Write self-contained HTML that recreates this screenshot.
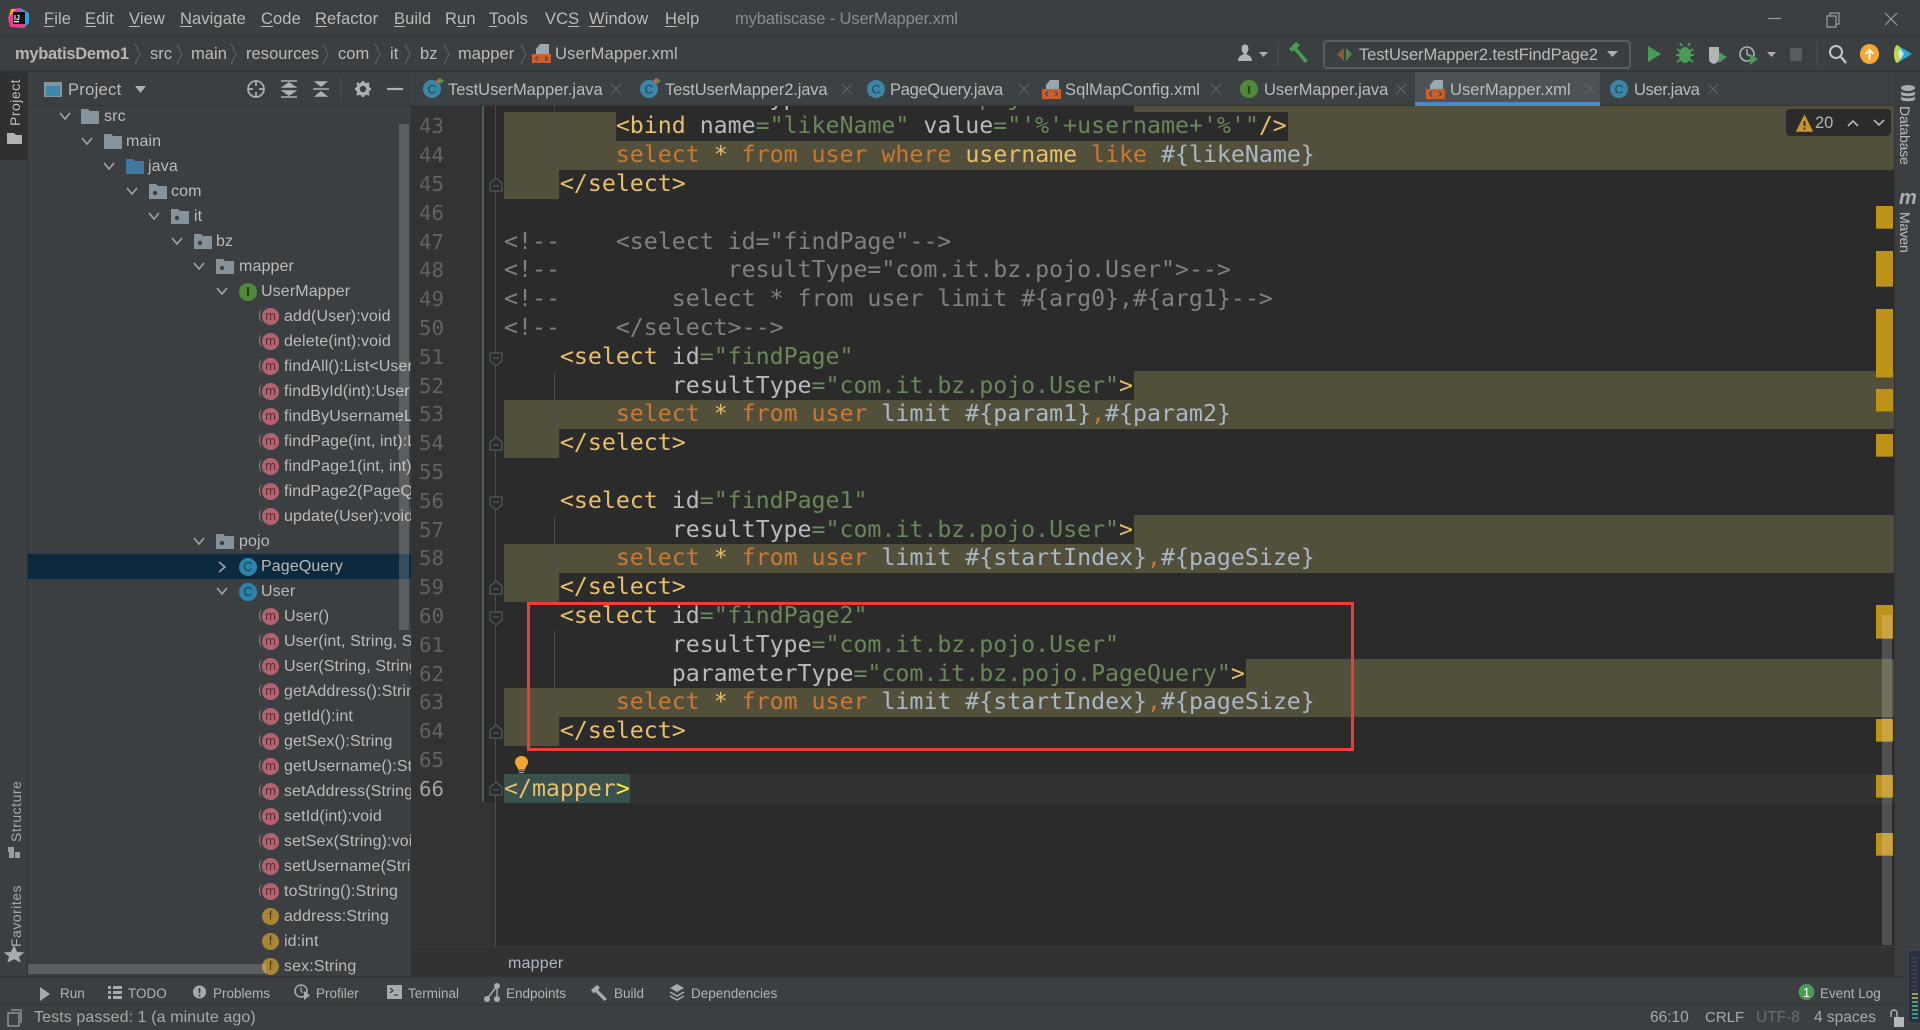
<!DOCTYPE html>
<html><head><meta charset="utf-8"><title>mybatiscase - UserMapper.xml</title>
<style>
html,body{margin:0;padding:0;width:1920px;height:1030px;overflow:hidden;background:#3c3f41;font-family:"Liberation Sans",sans-serif;color:#bbb}
div,span,i,b{position:absolute;white-space:nowrap}
u{text-decoration:underline;text-underline-offset:2px}
.m span{top:9px;font-size:16.5px;line-height:20px;letter-spacing:.1px}
.n span{top:44px;font-size:16.5px;line-height:20px;letter-spacing:.05px}
.tb span{top:80px;font-size:16.5px;line-height:20px}
.bt span{top:984px;font-size:13.5px;line-height:18px;color:#b3b3b3}
.st span{top:1008px;font-size:16px;line-height:20px;color:#a8a8a8}
.r{left:0;width:411px;height:25px;line-height:25px;font-size:16px;letter-spacing:.12px}
.r b{font-weight:normal;left:284px;top:0}
.ic{display:block;width:17px;height:17px;border-radius:50%;left:262px;top:4px;font-style:normal;font-size:13px;line-height:16px;text-align:center;letter-spacing:0}
.ic.m{background:#b5626f;color:#5e2a33}
.ic.m:before{content:"";position:absolute;left:-3px;top:1px;width:6px;height:13px;border-left:1.5px solid #8b8d8f;border-radius:50%}
.ic.f{background:#a98536;color:#51401a}
.ic.cl{background:#2e83ab;color:#173f55;width:18px;height:18px;left:239px;line-height:18px}
.ic.gi{background:#4f8a38;color:#263f1a;width:18px;height:18px;left:239px;line-height:18px;font-family:"Liberation Serif",serif;font-weight:bold}
.r svg{position:absolute}
.l{left:504px;height:28.8px;line-height:28.8px;margin-top:.4px;font-family:"DejaVu Sans Mono","Liberation Mono",monospace;font-size:23.25px;letter-spacing:-.02px;white-space:pre;color:#a9b7c6}
.t{color:#e8bf6a;position:static}.a{color:#bababa;position:static}.v{color:#6a8759;position:static}.k{color:#cc7832;position:static}.c{color:#808080;position:static}.h{color:#a9b7c6;position:static}
.o{background:#52503a;height:29px}
.ln{left:419px;margin-top:.4px;font-family:"DejaVu Sans Mono","Liberation Mono",monospace;font-size:20.8px;line-height:28.8px;color:#606366}
.mk{left:1876px;width:17px;background:#be9117;box-shadow:inset 0 -1px 0 #8a7023}
.g{left:554px;width:1px;background:#474747}
.v1{font-size:14px;letter-spacing:.5px;color:#bdbdbd;line-height:16px;transform-origin:0 0}
</style></head><body>

<!-- bars -->
<div style="left:0;top:35px;width:1920px;height:1px;background:#323334"></div>
<div style="left:0;top:71px;width:1920px;height:1px;background:#323334"></div>

<!-- menu -->
<div class="m" style="left:0;top:0">
<span style="left:44px"><u>F</u>ile</span>
<span style="left:85px"><u>E</u>dit</span>
<span style="left:129px"><u>V</u>iew</span>
<span style="left:180px"><u>N</u>avigate</span>
<span style="left:261px"><u>C</u>ode</span>
<span style="left:315px"><u>R</u>efactor</span>
<span style="left:394px"><u>B</u>uild</span>
<span style="left:445px">R<u>u</u>n</span>
<span style="left:489px"><u>T</u>ools</span>
<span style="left:545px">VC<u>S</u></span>
<span style="left:589px"><u>W</u>indow</span>
<span style="left:665px"><u>H</u>elp</span>
<span style="left:735px;color:#8a8d8f;letter-spacing:-.13px">mybatiscase - UserMapper.xml</span>
</div>

<!-- nav -->
<div class="n" style="left:0;top:0">
<span style="left:15px;font-weight:bold;color:#b5b5b5;letter-spacing:-.3px">mybatisDemo1</span>
<span style="left:150px">src</span>
<span style="left:191px">main</span>
<span style="left:246px">resources</span>
<span style="left:338px">com</span>
<span style="left:390px">it</span>
<span style="left:420px">bz</span>
<span style="left:458px">mapper</span>
<span style="left:555px;letter-spacing:.2px">UserMapper.xml</span>
<span style="left:1359px;letter-spacing:-.08px;top:45px">TestUserMapper2.testFindPage2</span>
</div>
<div style="left:1323px;top:40px;width:304px;height:25px;border:2px solid #5a5d5f;border-radius:4px"></div>

<!-- left stripe & tree -->
<div style="left:0;top:72px;width:27px;height:88px;background:#2e3031"></div>
<div style="left:27px;top:72px;width:1px;height:904px;background:#323334"></div>

<div style="left:0;top:0;width:411px;height:976px;overflow:hidden">
<div style="left:28px;top:554px;width:383px;height:25px;background:#0d293e"></div>

<div class="r" style="top:104px"><svg style="left:59px;top:8px" width="12" height="9"><path d="M1 1l5 6 5-6" stroke="#a0a5a8" stroke-width="1.6" fill="none"/></svg><svg style="left:81px;top:5px" width="18" height="15"><path d="M0 0h7l2 2h9v13H0z" fill="#87939a"/></svg><b style="left:104px">src</b></div>
<div class="r" style="top:129px"><svg style="left:81px;top:8px" width="12" height="9"><path d="M1 1l5 6 5-6" stroke="#a0a5a8" stroke-width="1.6" fill="none"/></svg><svg style="left:104px;top:5px" width="18" height="15"><path d="M0 0h7l2 2h9v13H0z" fill="#87939a"/></svg><b style="left:126px">main</b></div>
<div class="r" style="top:154px"><svg style="left:103px;top:8px" width="12" height="9"><path d="M1 1l5 6 5-6" stroke="#a0a5a8" stroke-width="1.6" fill="none"/></svg><svg style="left:126px;top:5px" width="18" height="15"><path d="M0 0h7l2 2h9v13H0z" fill="#3d7a9e"/></svg><b style="left:148px">java</b></div>
<div class="r" style="top:179px"><svg style="left:126px;top:8px" width="12" height="9"><path d="M1 1l5 6 5-6" stroke="#a0a5a8" stroke-width="1.6" fill="none"/></svg><svg style="left:149px;top:5px" width="18" height="15"><path d="M0 0h7l2 2h9v13H0z" fill="#87939a"/><circle cx="6" cy="9" r="2.2" fill="#3c3f41"/></svg><b style="left:171px">com</b></div>
<div class="r" style="top:204px"><svg style="left:148px;top:8px" width="12" height="9"><path d="M1 1l5 6 5-6" stroke="#a0a5a8" stroke-width="1.6" fill="none"/></svg><svg style="left:171px;top:5px" width="18" height="15"><path d="M0 0h7l2 2h9v13H0z" fill="#87939a"/><circle cx="6" cy="9" r="2.2" fill="#3c3f41"/></svg><b style="left:194px">it</b></div>
<div class="r" style="top:229px"><svg style="left:171px;top:8px" width="12" height="9"><path d="M1 1l5 6 5-6" stroke="#a0a5a8" stroke-width="1.6" fill="none"/></svg><svg style="left:194px;top:5px" width="18" height="15"><path d="M0 0h7l2 2h9v13H0z" fill="#87939a"/><circle cx="6" cy="9" r="2.2" fill="#3c3f41"/></svg><b style="left:216px">bz</b></div>
<div class="r" style="top:254px"><svg style="left:193px;top:8px" width="12" height="9"><path d="M1 1l5 6 5-6" stroke="#a0a5a8" stroke-width="1.6" fill="none"/></svg><svg style="left:216px;top:5px" width="18" height="15"><path d="M0 0h7l2 2h9v13H0z" fill="#87939a"/><circle cx="6" cy="9" r="2.2" fill="#3c3f41"/></svg><b style="left:239px">mapper</b></div>
<div class="r" style="top:279px"><svg style="left:216px;top:8px" width="12" height="9"><path d="M1 1l5 6 5-6" stroke="#a0a5a8" stroke-width="1.6" fill="none"/></svg><i class="ic gi">I</i><b style="left:261px">UserMapper</b></div>

<div class="r" style="top:304px"><i class="ic m">m</i><b>add(User):void</b></div>
<div class="r" style="top:329px"><i class="ic m">m</i><b>delete(int):void</b></div>
<div class="r" style="top:354px"><i class="ic m">m</i><b>findAll():List&lt;User&gt;</b></div>
<div class="r" style="top:379px"><i class="ic m">m</i><b>findById(int):User</b></div>
<div class="r" style="top:404px"><i class="ic m">m</i><b>findByUsernameLike(String)</b></div>
<div class="r" style="top:429px"><i class="ic m">m</i><b>findPage(int, int):List</b></div>
<div class="r" style="top:454px"><i class="ic m">m</i><b>findPage1(int, int):List</b></div>
<div class="r" style="top:479px"><i class="ic m">m</i><b>findPage2(PageQuery)</b></div>
<div class="r" style="top:504px"><i class="ic m">m</i><b>update(User):void</b></div>

<div class="r" style="top:529px"><svg style="left:193px;top:8px" width="12" height="9"><path d="M1 1l5 6 5-6" stroke="#a0a5a8" stroke-width="1.6" fill="none"/></svg><svg style="left:216px;top:5px" width="18" height="15"><path d="M0 0h7l2 2h9v13H0z" fill="#87939a"/><circle cx="6" cy="9" r="2.2" fill="#3c3f41"/></svg><b style="left:239px">pojo</b></div>
<div class="r" style="top:554px"><svg style="left:218px;top:7px" width="9" height="12"><path d="M1 1l6 5-6 5" stroke="#a0a5a8" stroke-width="1.6" fill="none"/></svg><i class="ic cl">C</i><b style="left:261px">PageQuery</b></div>
<div class="r" style="top:579px"><svg style="left:216px;top:8px" width="12" height="9"><path d="M1 1l5 6 5-6" stroke="#a0a5a8" stroke-width="1.6" fill="none"/></svg><i class="ic cl">C</i><b style="left:261px">User</b></div>

<div class="r" style="top:604px"><i class="ic m">m</i><b>User()</b></div>
<div class="r" style="top:629px"><i class="ic m">m</i><b>User(int, String, String)</b></div>
<div class="r" style="top:654px"><i class="ic m">m</i><b>User(String, String)</b></div>
<div class="r" style="top:679px"><i class="ic m">m</i><b>getAddress():String</b></div>
<div class="r" style="top:704px"><i class="ic m">m</i><b>getId():int</b></div>
<div class="r" style="top:729px"><i class="ic m">m</i><b>getSex():String</b></div>
<div class="r" style="top:754px"><i class="ic m">m</i><b>getUsername():String</b></div>
<div class="r" style="top:779px"><i class="ic m">m</i><b>setAddress(String)</b></div>
<div class="r" style="top:804px"><i class="ic m">m</i><b>setId(int):void</b></div>
<div class="r" style="top:829px"><i class="ic m">m</i><b>setSex(String):void</b></div>
<div class="r" style="top:854px"><i class="ic m">m</i><b>setUsername(String)</b></div>
<div class="r" style="top:879px"><i class="ic m">m</i><b>toString():String</b></div>
<div class="r" style="top:904px"><i class="ic f">f</i><b>address:String</b></div>
<div class="r" style="top:929px"><i class="ic f">f</i><b>id:int</b></div>
<div class="r" style="top:954px"><i class="ic f">f</i><b>sex:String</b></div>

<div style="left:399px;top:124px;width:10px;height:506px;background:rgba(255,255,255,.17)"></div>
<div style="left:28px;top:964px;width:238px;height:10px;background:rgba(255,255,255,.17)"></div>
</div>

<!-- project header -->
<div style="left:28px;top:72px;width:383px;height:33px;background:#3c3f41"></div>
<div style="left:28px;top:105px;width:383px;height:1px;background:#323334"></div>
<span style="left:68px;top:80px;font-size:16.5px;line-height:20px;letter-spacing:.3px">Project</span>

<!-- tabs -->
<div style="left:411px;top:72px;width:1483px;height:33px;background:#3c4143"></div>
<div style="left:411px;top:105px;width:1483px;height:1px;background:#323334"></div>
<div style="left:1415px;top:72px;width:185px;height:30px;background:#4e5254"></div>
<div style="left:1415px;top:102px;width:185px;height:4px;background:#4a88c7"></div>
<div class="tb" style="left:0;top:0">
<span style="left:448px;letter-spacing:-.02px">TestUserMapper.java</span>
<span style="left:665px;letter-spacing:-.13px">TestUserMapper2.java</span>
<span style="left:890px;letter-spacing:-.3px">PageQuery.java</span>
<span style="left:1065px;letter-spacing:.07px">SqlMapConfig.xml</span>
<span style="left:1264px;letter-spacing:-.03px">UserMapper.java</span>
<span style="left:1450px;letter-spacing:.04px">UserMapper.xml</span>
<span style="left:1634px;letter-spacing:-.37px">User.java</span>
</div>

<!-- editor -->
<div style="left:411px;top:106px;width:73px;height:840px;background:#313335"></div>
<div style="left:484px;top:106px;width:1410px;height:840px;background:#2b2b2b"></div>
<div style="left:484px;top:802px;width:11px;height:144px;background:#313335"></div>
<div style="left:482px;top:106px;width:2px;height:696px;background:#4a6058"></div>
<div style="left:495px;top:106px;width:1px;height:840px;background:#4a4c4e"></div>

<div style="left:0;top:106px;width:1894px;height:840px;overflow:hidden">
<div class="o" style="left:1134px;top:0;width:760px;height:6px"></div>
<div class="o" style="left:504px;top:6px;width:112px"></div>
<div class="o" style="left:1288px;top:0;width:606px;height:35px"></div>
<div class="o" style="left:504px;top:35px;width:1390px"></div>
<div class="o" style="left:504px;top:64px;width:55px"></div>
<div class="o" style="left:1134px;top:265px;width:760px"></div>
<div class="o" style="left:504px;top:294px;width:1390px"></div>
<div class="o" style="left:504px;top:323px;width:55px"></div>
<div class="o" style="left:1134px;top:409px;width:760px"></div>
<div class="o" style="left:504px;top:438px;width:1390px"></div>
<div class="o" style="left:504px;top:467px;width:55px"></div>
<div class="o" style="left:1246px;top:553px;width:648px"></div>
<div class="o" style="left:504px;top:582px;width:1390px"></div>
<div class="o" style="left:504px;top:611px;width:55px"></div>
<div style="left:504px;top:668px;width:1390px;height:29px;background:#323232"></div>
<div style="left:504px;top:668px;width:126px;height:29px;background:#3b514d"></div>

<div class="g" style="top:0;height:64px"></div>
<div class="g" style="top:265px;height:57px"></div>
<div class="g" style="top:409px;height:57px"></div>
<div class="g" style="top:524px;height:87px"></div>

<div class="l" style="top:-22.8px">            <span class="a">resultType</span><span class="v">="com.it.bz.pojo.User"</span><span class="t">&gt;</span></div>
<div class="l" style="top:6px">        <span class="t">&lt;bind </span><span class="a">name</span><span class="v">="likeName" </span><span class="a">value</span><span class="v">="'%'+username+'%'"</span><span class="t">/&gt;</span></div>
<div class="l" style="top:34.8px">        <span class="k">select </span><span class="t">* </span><span class="k">from user where </span><span class="t">username </span><span class="k">like </span><span class="h">#{likeName}</span></div>
<div class="l" style="top:63.6px">    <span class="t">&lt;/select&gt;</span></div>
<div class="l c" style="top:121.2px;position:absolute">&lt;!--    &lt;select id="findPage"--&gt;</div>
<div class="l c" style="top:150px;position:absolute">&lt;!--            resultType="com.it.bz.pojo.User"&gt;--&gt;</div>
<div class="l c" style="top:178.8px;position:absolute">&lt;!--        select * from user limit #{arg0},#{arg1}--&gt;</div>
<div class="l c" style="top:207.6px;position:absolute">&lt;!--    &lt;/select&gt;--&gt;</div>
<div class="l" style="top:236.4px">    <span class="t">&lt;select </span><span class="a">id</span><span class="v">="findPage"</span></div>
<div class="l" style="top:265.2px">            <span class="a">resultType</span><span class="v">="com.it.bz.pojo.User"</span><span class="t">&gt;</span></div>
<div class="l" style="top:294px">        <span class="k">select </span><span class="t">* </span><span class="k">from user </span><span class="h">limit #{param1}</span><span class="k">,</span><span class="h">#{param2}</span></div>
<div class="l" style="top:322.8px">    <span class="t">&lt;/select&gt;</span></div>
<div class="l" style="top:380.4px">    <span class="t">&lt;select </span><span class="a">id</span><span class="v">="findPage1"</span></div>
<div class="l" style="top:409.2px">            <span class="a">resultType</span><span class="v">="com.it.bz.pojo.User"</span><span class="t">&gt;</span></div>
<div class="l" style="top:438px">        <span class="k">select </span><span class="t">* </span><span class="k">from user </span><span class="h">limit #{startIndex}</span><span class="k">,</span><span class="h">#{pageSize}</span></div>
<div class="l" style="top:466.8px">    <span class="t">&lt;/select&gt;</span></div>
<div class="l" style="top:495.6px">    <span class="t">&lt;select </span><span class="a">id</span><span class="v">="findPage2"</span></div>
<div class="l" style="top:524.4px">            <span class="a">resultType</span><span class="v">="com.it.bz.pojo.User"</span></div>
<div class="l" style="top:553.2px">            <span class="a">parameterType</span><span class="v">="com.it.bz.pojo.PageQuery"</span><span class="t">&gt;</span></div>
<div class="l" style="top:582px">        <span class="k">select </span><span class="t">* </span><span class="k">from user </span><span class="h">limit #{startIndex}</span><span class="k">,</span><span class="h">#{pageSize}</span></div>
<div class="l" style="top:610.8px">    <span class="t">&lt;/select&gt;</span></div>
<div class="l" style="top:668.4px"><span class="t">&lt;/mapper</span><span style="color:#ffef28;position:static">&gt;</span></div>

<div class="ln" style="top:6px">43</div><div class="ln" style="top:34.8px">44</div><div class="ln" style="top:63.6px">45</div><div class="ln" style="top:92.4px">46</div><div class="ln" style="top:121.2px">47</div><div class="ln" style="top:150px">48</div><div class="ln" style="top:178.8px">49</div><div class="ln" style="top:207.6px">50</div><div class="ln" style="top:236.4px">51</div><div class="ln" style="top:265.2px">52</div><div class="ln" style="top:294px">53</div><div class="ln" style="top:322.8px">54</div><div class="ln" style="top:351.6px">55</div><div class="ln" style="top:380.4px">56</div><div class="ln" style="top:409.2px">57</div><div class="ln" style="top:438px">58</div><div class="ln" style="top:466.8px">59</div><div class="ln" style="top:495.6px">60</div><div class="ln" style="top:524.4px">61</div><div class="ln" style="top:553.2px">62</div><div class="ln" style="top:582px">63</div><div class="ln" style="top:610.8px">64</div><div class="ln" style="top:639.6px">65</div><div class="ln" style="top:668.4px;color:#a4a3a3">66</div>
</div>

<!-- red box -->
<div style="left:527px;top:602px;width:821px;height:143px;border:3px solid #f33a3a"></div>

<!-- error stripe -->
<div class="mk" style="top:206px;height:23px"></div>
<div class="mk" style="top:251px;height:36px"></div>
<div class="mk" style="top:309px;height:69px"></div>
<div class="mk" style="top:389px;height:23px"></div>
<div class="mk" style="top:434px;height:23px"></div>
<div class="mk" style="top:605px;height:34px"></div>
<div class="mk" style="top:719px;height:23px"></div>
<div class="mk" style="top:775px;height:23px"></div>
<div class="mk" style="top:833px;height:23px"></div>
<div style="left:1882px;top:615px;width:10px;height:330px;background:rgba(255,255,255,.18)"></div>

<!-- inspection widget -->
<div style="left:1786px;top:109px;width:105px;height:27px;background:#2b2b2b;border-radius:4px"></div>
<span style="left:1815px;top:113px;font-size:16.5px;line-height:20px;color:#b5b5b5">20</span>

<!-- breadcrumb -->
<div style="left:411px;top:946px;width:1483px;height:30px;background:#323232"></div>
<div style="left:411px;top:946px;width:1483px;height:1px;background:#3a3a3a"></div>
<span style="left:508px;top:954px;font-size:16px;line-height:20px;color:#a9b7c6;letter-spacing:.2px">mapper</span>

<!-- right stripe -->
<div style="left:1894px;top:106px;width:1px;height:870px;background:#323334"></div>

<!-- bottom bars -->
<div style="left:0;top:976px;width:1920px;height:1px;background:#323334"></div>
<div style="left:0;top:1004px;width:1920px;height:1px;background:#323334"></div>
<div class="bt" style="left:0;top:1px">
<span style="left:60px">Run</span>
<span style="left:128px">TODO</span>
<span style="left:213px">Problems</span>
<span style="left:316px">Profiler</span>
<span style="left:408px">Terminal</span>
<span style="left:506px">Endpoints</span>
<span style="left:614px">Build</span>
<span style="left:691px">Dependencies</span>
<span style="left:1820px">Event Log</span>
</div>
<div class="st" style="left:0;top:0">
<span style="left:34px;letter-spacing:.1px">Tests passed: 1 (a minute ago)</span>
<span style="left:1650px;font-size:15.5px">66:10</span>
<span style="left:1705px;font-size:15px">CRLF</span>
<span style="left:1756px;font-size:15.5px;color:#6a6d70">UTF-8</span>
<span style="left:1814px;font-size:15.5px">4 spaces</span>
</div>

<!-- vertical labels -->
<span class="v1" style="left:7px;top:126px;transform:rotate(-90deg)">Project</span>
<span class="v1" style="left:8px;top:842px;transform:rotate(-90deg);color:#a9a9a9">Structure</span>
<span class="v1" style="left:8px;top:947px;transform:rotate(-90deg);color:#a9a9a9">Favorites</span>
<span class="v1" style="left:1913px;top:106px;transform:rotate(90deg);letter-spacing:-.15px">Database</span>
<span class="v1" style="left:1913px;top:212px;transform:rotate(90deg);letter-spacing:-.3px">Maven</span>

<!-- icons -->
<svg style="position:absolute;left:0;top:0;z-index:5" width="1920" height="1030">
<!-- logo -->
<path d="M11 9l9-1 9 5v10l-5 5-14-1-2-9z" fill="#e83e8c"/><path d="M20 8l9 5v10l-4 3z" fill="#2f9fe0"/><path d="M9 17l2-8 5 0z" fill="#f7a13a"/>
<rect x="13" y="12" width="12" height="12" fill="#111"/><text x="14" y="20" font-size="7" fill="#fff" font-family="Liberation Sans" font-weight="bold">IJ</text><rect x="14" y="21" width="5" height="1.3" fill="#fff"/>

<!-- nav chevrons -->
<g stroke="#5c6063" stroke-width="1.2" fill="none">
<path d="M135 44l5 10-5 10M177 44l5 10-5 10M231 44l5 10-5 10M323 44l5 10-5 10M375 44l5 10-5 10M405 44l5 10-5 10M444 44l5 10-5 10M521 44l5 10-5 10"/>
</g>
<!-- nav xml icon -->
<path d="M540 44h9v10h-13v-5z" fill="#9aa7b0"/><rect x="532" y="54" width="19" height="9" fill="#c75f2e"/><path d="M538 56.5l-2.5 2 2.5 2M545 56.5l2.5 2-2.5 2" stroke="#3c3f41" stroke-width="1" fill="none"/>

<!-- window controls -->
<path d="M1768 18.5h13" stroke="#9a9d9f" stroke-width="1.2"/>
<path d="M1827 16h9v11h-9zM1830 16v-3h9v11h-3" stroke="#9a9d9f" stroke-width="1.2" fill="none"/>
<path d="M1885 13l12 12M1897 13l-12 12" stroke="#9a9d9f" stroke-width="1.2"/>

<!-- toolbar right -->
<path d="M1238 61c0-5 4-6 6-7-2-2-3-4-2-8 1-2 5-2 6 0 1 4 0 6-2 8 2 1 6 2 6 7z" fill="#aeb4b8"/><path d="M1259 52h9l-4.500 5z" fill="#a8adb0"/>
<path d="M1278 42v24" stroke="#4d5052"/>
<path d="M1289 49l7-7 4 3-3 3 11 13-3 2-11-13-2 2z" fill="#499c54"/>
<path d="M1344 48l-7 6 7 7z" fill="#8a5a3c"/><path d="M1346 48l6 6-6 7z" fill="#4f8a4a"/>
<path d="M1607 51h11l-5.500 6z" fill="#aeb1b3"/>
<path d="M1648 46l13 8-13 8z" fill="#499c54"/>
<g fill="#499c54"><ellipse cx="1685" cy="55" rx="6" ry="8"/><path d="M1677 49l4 3M1693 49l-4 3M1676 55h4M1694 55h-4M1677 62l4-3M1693 62l-4-3M1682 46l-2-3M1688 46l2-3" stroke="#499c54" stroke-width="2"/></g>
<path d="M1709 47h10v12c0 3-3 4-5 5-3-1-5-2-5-5z" fill="#aeb4b8"/><path d="M1719 52l8 5-8 6z" fill="#499c54"/>
<circle cx="1747" cy="54" r="7" stroke="#aeb4b8" stroke-width="1.6" fill="none"/><path d="M1747 49v5l3 2" stroke="#aeb4b8" stroke-width="1.4" fill="none"/><path d="M1750 54l8 5-8 6z" fill="#499c54"/>
<path d="M1767 52h9l-4.500 5z" fill="#aeb1b3"/>
<rect x="1790" y="48" width="12" height="13" fill="#5a5d5f"/>
<path d="M1817 42v24" stroke="#4d5052"/>
<circle cx="1836" cy="52" r="6" stroke="#c2c5c7" stroke-width="2" fill="none"/><path d="M1841 57l5 6" stroke="#c2c5c7" stroke-width="2.400"/>
<ellipse cx="1869.500" cy="54" rx="9.500" ry="10" fill="#f4a732"/><path d="M1869.500 60v-10M1865.500 54l4-4 4 4" stroke="#fff" stroke-width="1.800" fill="none"/>
<path d="M1897 45l15 9-15 9c-2-1-3-5-3-9s1-8 3-9z" fill="#27a8df"/><path d="M1897 45c-2 1-3 5-3 9s1 8 3 9l3-2c-1-2-2-4-2-7s1-5 2-7z" fill="#c5d93a"/><path d="M1897 63l3-2 5-3 7-4z" fill="#1aa37c"/><path d="M1900 48l4 6-4 6c-1-2-2-4-2-6s1-4 2-6z" fill="#d8e8c0"/>

<!-- left stripe icons -->
<path d="M7 133h7l2 2h6v9H7z" fill="#b0b3b5"/>
<path d="M8 847h6v5H8zM9 852h5v6H9zM15 852h5v6h-5z" fill="#9a9d9f"/>
<path d="M14.500 947l3.500 8 8 .5-6 5 2 7-7.500-4-7.500 4 2-7-6-5 8-.5z" fill="#a9abad" transform="translate(1 0) scale(.9 .85) translate(0 165)"/>

<!-- project header icons -->
<rect x="44" y="82" width="18" height="15" fill="#87939a"/><rect x="46" y="86" width="14" height="10" fill="#3d86ad"/>
<path d="M135 86h11l-5.500 7z" fill="#aeb1b3"/>
<circle cx="256" cy="89" r="8" stroke="#aeb1b3" stroke-width="1.700" fill="none"/><path d="M256 81v5M256 92v5M248 89h5M259 89h5" stroke="#aeb1b3" stroke-width="1.700"/>
<path d="M281 81h16M281 97h16M283 87l6-4 6 4zM283 91l6 4 6-4z" stroke="#aeb1b3" stroke-width="1.500" fill="#aeb1b3"/>
<path d="M313 89h16M316 82l5 4 5-4zM316 96l5-4 5 4z" stroke="#aeb1b3" stroke-width="1.500" fill="#aeb1b3"/>
<path d="M341 77v24" stroke="#4d5052"/>
<circle cx="363" cy="89" r="5" stroke="#aeb1b3" stroke-width="3.500" fill="none"/><path d="M363 81v3M363 94v3M355 89h3M368 89h3M357 83l2 2M369 83l-2 2M357 95l2-2M369 95l-2-2" stroke="#aeb1b3" stroke-width="2.500"/>
<path d="M387 89h16" stroke="#aeb1b3" stroke-width="2.200"/>

<!-- tab icons -->
<g font-family="Liberation Sans" font-size="12" text-anchor="middle">
<circle cx="432" cy="89" r="9" fill="#3b86a6"/><text x="432" y="93.500" fill="#1a3f52">C</text><path d="M436 81l3-3 3 3-3 3z" fill="#d0603c"/><path d="M440 78v6l4-3z" fill="#499c54"/>
<circle cx="649" cy="89" r="9" fill="#3b86a6"/><text x="649" y="93.500" fill="#1a3f52">C</text><path d="M653 81l3-3 3 3-3 3z" fill="#d0603c"/><path d="M657 78v6l4-3z" fill="#499c54"/>
<circle cx="876" cy="89" r="9" fill="#3b86a6"/><text x="876" y="93.500" fill="#1a3f52">C</text>
<circle cx="1249" cy="89" r="9" fill="#4f8a38"/><text x="1249" y="93.500" fill="#263f1a" font-family="Liberation Serif" font-weight="bold">I</text>
<circle cx="1619" cy="89" r="9" fill="#3b86a6"/><text x="1619" y="93.500" fill="#1a3f52">C</text>
</g>
<path d="M1050 80h9v10h-13v-5z" fill="#9aa7b0"/><rect x="1042" y="89" width="19" height="10" fill="#c75f2e"/><path d="M1048 91.500l-2.500 2.500 2.500 2.500M1055 91.500l2.500 2.500-2.500 2.500" stroke="#3c3f41" stroke-width="1" fill="none"/>
<path d="M1434 80h9v10h-13v-5z" fill="#9aa7b0"/><rect x="1426" y="89" width="19" height="10" fill="#c75f2e"/><path d="M1432 91.500l-2.500 2.500 2.500 2.500M1439 91.500l2.500 2.500-2.500 2.500" stroke="#3c3f41" stroke-width="1" fill="none"/>
<g stroke="#5f6365" stroke-width="1.200"><path d="M611 84l10 10M621 84l-10 10M842 84l10 10M852 84l-10 10M1019 84l10 10M1029 84l-10 10M1211 84l10 10M1221 84l-10 10M1396 84l10 10M1406 84l-10 10M1585 84l10 10M1595 84l-10 10M1708 84l10 10M1718 84l-10 10"/></g>

<!-- warning -->
<path d="M1804.500 116l7.500 15h-15z" fill="#c9962a" stroke="#c9962a" stroke-width="1.500"/><path d="M1804.500 121v5M1804.500 127.500v2" stroke="#2b2b2b" stroke-width="1.800"/>
<path d="M1848 126l5-5 5 5M1874 120l5 5 5-5" stroke="#b5b7b8" stroke-width="1.600" fill="none"/>

<!-- fold markers -->
<g fill="#2b2b2b" stroke="#55585a" stroke-width="1.200">
<path d="M490 353h12v8l-6 5-6-5zM490 497h12v8l-6 5-6-5zM490 612h12v8l-6 5-6-5z"/>
<path d="M490 191h12v-8l-6-5-6 5zM490 450h12v-8l-6-5-6 5zM490 594h12v-8l-6-5-6 5zM490 738h12v-8l-6-5-6 5zM490 795h12v-8l-6-5-6 5z"/>
<path d="M493 358h6M493 502h6M493 617h6M493 186h6M493 445h6M493 589h6M493 733h6M493 790h6"/>
</g>
<!-- bulb -->
<path d="M521.500 756c4 0 6.500 3 6.500 6 0 3-2 4-3 7h-7c-1-3-3-4-3-7 0-3 2.500-6 6.500-6z" fill="#f0a732"/><path d="M518 770h7M519 772.500h5" stroke="#a5a7a9" stroke-width="1.300"/>

<!-- right stripe icons -->
<g fill="#a9adb0"><ellipse cx="1908" cy="88" rx="7" ry="3"/><path d="M1901 91c0 3 14 3 14 0v3c0 3-14 3-14 0zM1901 96c0 3 14 3 14 0v3c0 3-14 3-14 0z"/></g>
<text x="1899" y="204" font-family="Liberation Sans" font-size="20" font-style="italic" font-weight="bold" fill="#a9adb0">m</text>

<!-- bottom icons -->
<path d="M40 987l10 7-10 7z" fill="#a8abad"/>
<path d="M108 986h3v3h-3zM113 986h9v3h-9zM108 991h3v3h-3zM113 991h9v3h-9zM108 996h3v3h-3zM113 996h9v3h-9z" fill="#a8abad"/>
<circle cx="199.500" cy="992" r="6.500" fill="#a8abad"/><path d="M199.500 988v5M199.500 994.500v2" stroke="#3c3f41" stroke-width="1.800"/>
<circle cx="301" cy="991" r="6" stroke="#a8abad" stroke-width="1.500" fill="none"/><path d="M301 987v4l2 2" stroke="#a8abad" stroke-width="1.200" fill="none"/><path d="M304 991l6 4.500-6 4.500z" fill="#a8abad"/>
<rect x="387" y="985" width="15" height="14" fill="#a8abad"/><path d="M390 988l3 2.500-3 2.500M394 995h4" stroke="#3c3f41" stroke-width="1.300" fill="none"/>
<circle cx="487" cy="999" r="3" fill="#a8abad"/><circle cx="497" cy="986" r="3" fill="#a8abad"/><circle cx="497" cy="999" r="3" fill="#a8abad"/><path d="M487 999l10-13v13" stroke="#a8abad" stroke-width="1.500" fill="none"/>
<path d="M591 990l6-5 3 2.500-2 2.500 9 9-2.500 2-9-9-2 1.500z" fill="#a8abad"/>
<path d="M677 984l7 4-7 4-7-4z" fill="#a8abad"/><path d="M670 992l7 4 7-4M670 996l7 4 7-4" stroke="#a8abad" stroke-width="1.500" fill="none"/>
<circle cx="1806.500" cy="992" r="8" fill="#499c54"/><text x="1806.500" y="997" text-anchor="middle" font-family="Liberation Sans" font-size="13" fill="#fff">1</text>

<!-- status icons -->
<path d="M11 1010h10v13" stroke="#9a9d9f" stroke-width="1.300" fill="none"/><rect x="8" y="1013" width="11" height="13" stroke="#9a9d9f" stroke-width="1.300" fill="none"/>
<rect x="1894" y="1017" width="10" height="10" fill="#b5b7b8"/><path d="M1891 1017v-4c0-4 6-4 6 0v4" stroke="#b5b7b8" stroke-width="1.400" fill="none"/>

<!-- memory widget -->
<rect x="1908" y="950" width="14" height="73" rx="3" fill="#2a3040" stroke="#444a58"/>
<path d="M1912 958h6M1912 962h6M1912 966h6M1912 970h6M1912 974h6M1912 978h6M1912 982h6M1912 986h6M1912 990h6" stroke="#3f4656" stroke-width="1.400"/>
<path d="M1912 994h6M1912 998h6" stroke="#b7c94a" stroke-width="1.400"/><path d="M1912 1002h6M1912 1006h6M1912 1010h6" stroke="#5cc28a" stroke-width="1.400"/><path d="M1912 1014h6M1912 1018h6" stroke="#34b3b0" stroke-width="1.400"/>
</svg>
</body></html>
